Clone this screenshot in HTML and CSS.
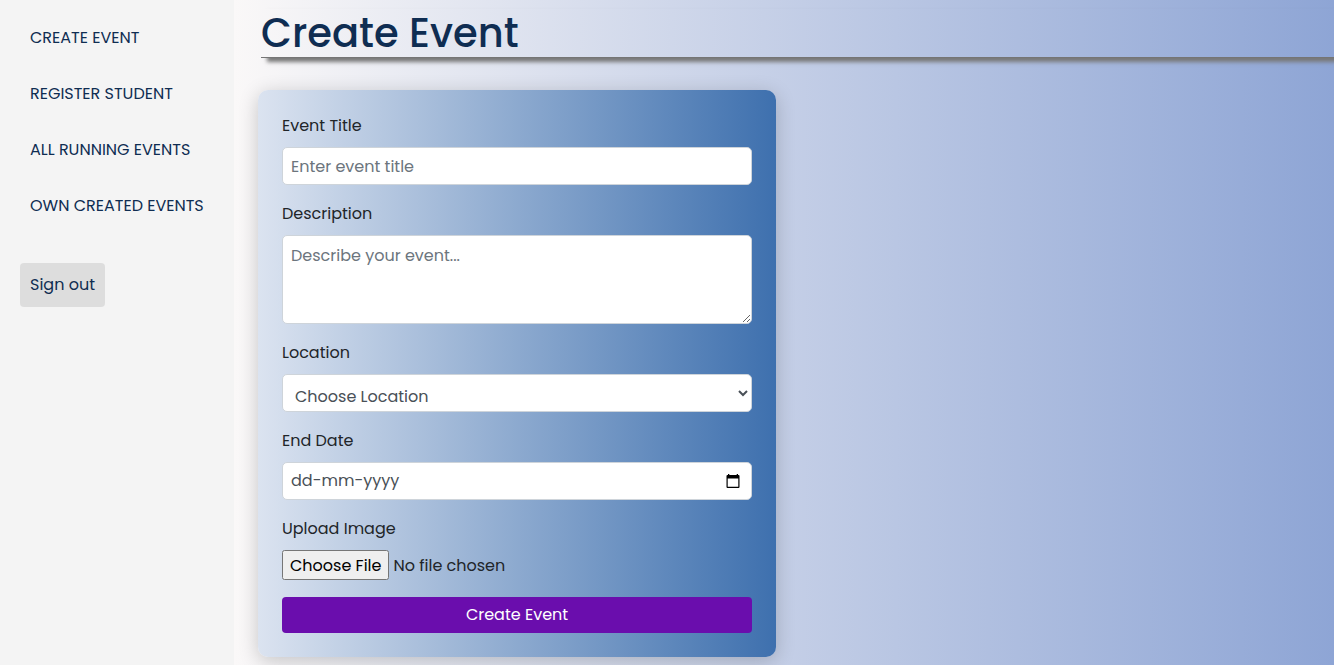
FILE: index.html
```html
<!DOCTYPE html>
<html lang="en">
<head>
<meta charset="utf-8">
<title>Create Event</title>
<link rel="stylesheet" href="styles.css">
</head>
<body>
<div class="layout">
  <aside class="sidebar">
    <nav class="menu">
      <a href="#create">CREATE EVENT</a>
      <a href="#register">REGISTER STUDENT</a>
      <a href="#running">ALL RUNNING EVENTS</a>
      <a href="#own">OWN CREATED EVENTS</a>
    </nav>
    <button class="sign-out" type="button">Sign out</button>
  </aside>
  <main class="content">
    <h1 class="title">Create Event</h1>
    <form class="card">
      <div class="field">
        <label for="event-title">Event Title</label>
        <input class="control" id="event-title" type="text" placeholder="Enter event title">
      </div>
      <div class="field">
        <label for="description">Description</label>
        <textarea class="control area" id="description" placeholder="Describe your event..."></textarea>
      </div>
      <div class="field">
        <label for="location">Location</label>
        <select class="control select" id="location"><option>Choose Location</option></select>
      </div>
      <div class="field">
        <label for="end-date">End Date</label>
        <div class="control date">
          <input class="date-text" id="end-date" type="text" placeholder="dd-mm-yyyy">
          <button class="date-button" type="button" aria-label="Open calendar">
            <svg width="14" height="15" viewBox="0 0 14 15" aria-hidden="true"><path d="M2 0h1.300v1h7.400V0H12v1h.5q1 0 1 1v11q0 1-1 1h-11q-1 0-1-1V2q0-1 1-1H2zM1.700 4.500v8.300h10.600V4.500z" fill="#000" fill-rule="evenodd"/></svg>
          </button>
        </div>
      </div>
      <div class="field">
        <label for="image">Upload Image</label>
        <input class="file" id="image" type="file">
      </div>
      <button class="submit" type="submit">Create Event</button>
    </form>
  </main>
</div>
</body>
</html>
```
FILE: styles.css
```css
* { box-sizing: border-box; }

body {
  margin: 0;
  font: 400 16px/24px Poppins, Inter, sans-serif;
  color: #212529;
}

input, textarea, select, button { font: inherit; margin: 0; }

.layout {
  display: flex;
  min-height: 100vh;
}

.sidebar {
  flex: 0 0 234px;
  padding: 16px 20px;
  background: #f4f4f4;
}

.menu {
  display: flex;
  flex-direction: column;
  gap: 12px;
  margin-bottom: 35px;
}

.menu a {
  padding: 10px;
  color: #0f2d52;
  text-decoration: none;
  white-space: nowrap;
}

.sign-out {
  padding: 10px;
  border: 0;
  border-radius: 4px;
  background: #ddd;
  color: #0f2d52;
}

.content {
  flex: 1;
  min-width: 0;
  overflow-x: clip;
  padding: 9px 0 8px 24px;
  background: linear-gradient(to right, #faf8f8, #8ea5d5);
}

.title {
  margin: 0 0 32px 3px;
  border-bottom: 1px solid #757575;
  box-shadow: 6px 4px 4px #777;
  color: #0f2d52;
  font-size: 40px;
  font-weight: 500;
  line-height: 48px;
}

.card {
  display: flex;
  flex-direction: column;
  gap: 17px;
  width: 518px;
  max-width: 100%;
  padding: 24px;
  border-radius: 10px;
  background: linear-gradient(to right, #dbe3f0, #3e70ae);
  box-shadow: 0 4px 20px rgba(0, 0, 0, 0.2);
}

.field {
  display: flex;
  flex-direction: column;
  gap: 9px;
}

.control {
  width: 100%;
  height: 38px;
  padding: 6px 8px;
  border: 1px solid #ced4da;
  border-radius: 5px;
  background: #fff;
  color: #495057;
}

.control::placeholder { color: #6c757d; opacity: 1; }

.area {
  height: 89px;
  padding-top: 8px;
  resize: vertical;
}

.select { padding: 9px 0 5px 8px; }

.date {
  display: flex;
  align-items: center;
  padding-right: 11px;
}

.date-text {
  flex: 1;
  min-width: 0;
  padding: 0;
  border: 0;
  background: none;
  color: #495057;
}

.date-text::placeholder { color: #495057; opacity: 1; }

.date-button {
  display: flex;
  padding: 0;
  border: 0;
  background: none;
}

.file { height: 30px; }

.file::file-selector-button {
  height: 30px;
  font: inherit;
}

.submit {
  height: 36px;
  padding: 0;
  border: 0;
  border-radius: 4px;
  background: #6a0dad;
  color: #fff;
}
```
